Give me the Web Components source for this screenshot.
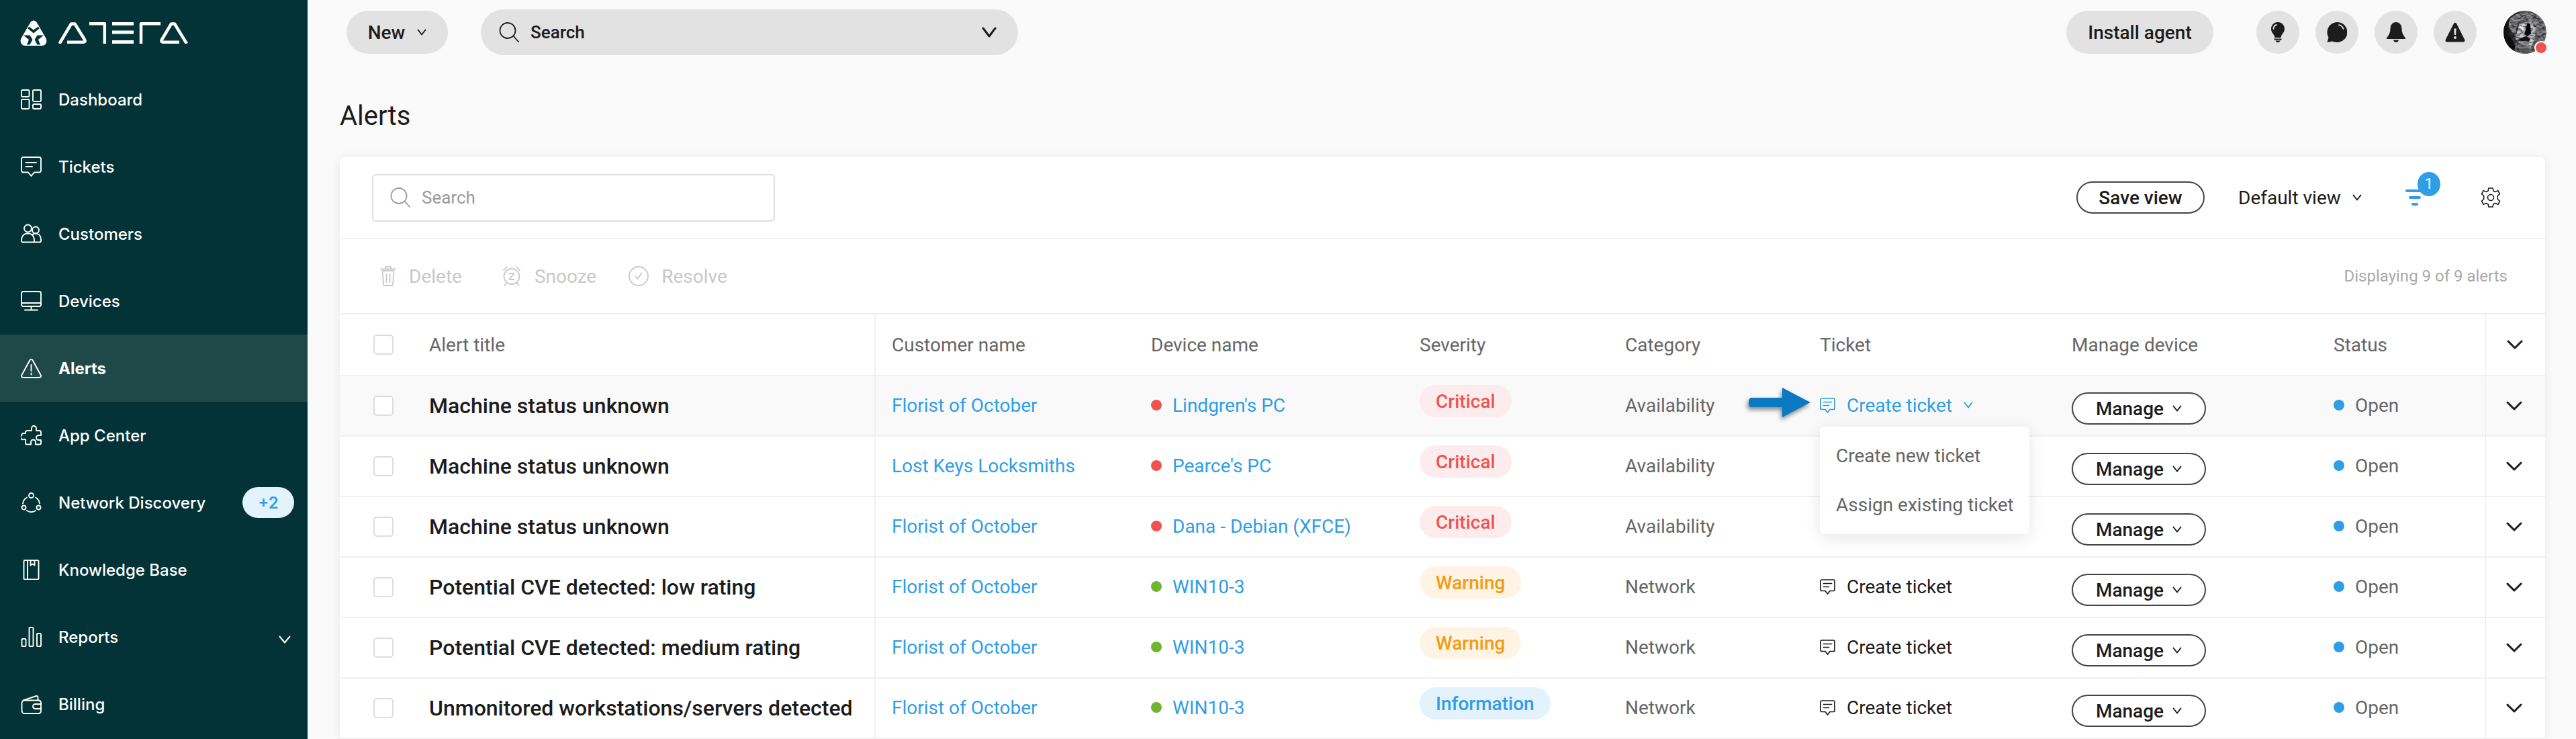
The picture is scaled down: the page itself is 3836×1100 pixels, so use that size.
<!DOCTYPE html>
<html lang="en"><head><meta charset="utf-8"><title>Alerts</title>
<style>
html,body{margin:0;padding:0;height:1100px;overflow:hidden;background:#fafafa;font-family:Roboto,"Liberation Sans",sans-serif;}
</style></head>
<body>
<app-shell>
  <side-bar slot="side">
    <nav-item icon="dash">Dashboard</nav-item>
    <nav-item icon="ticket">Tickets</nav-item>
    <nav-item icon="people">Customers</nav-item>
    <nav-item icon="monitor">Devices</nav-item>
    <nav-item icon="alert" active>Alerts</nav-item>
    <nav-item icon="puzzle">App Center</nav-item>
    <nav-item icon="network" badge="+2">Network Discovery</nav-item>
    <nav-item icon="book">Knowledge Base</nav-item>
    <nav-item icon="bars" caret>Reports</nav-item>
    <nav-item icon="wallet">Billing</nav-item>
  </side-bar>
  <top-bar slot="top"></top-bar>
  <page-title slot="main">Alerts</page-title>
  <alerts-card slot="main"></alerts-card>
</app-shell>
<script>
const ICONS={
dash:'<rect x="1" y="1" width="11.5" height="10" rx="1.5"/><rect x="18" y="1" width="12" height="17" rx="1.5"/><rect x="1" y="15" width="11.5" height="14" rx="1.5"/><rect x="18" y="22" width="12" height="7" rx="1.5"/>',
ticket:'<path d="M3.5 1H27.5A2.5 2.5 0 0 1 30 3.5V21A2.5 2.5 0 0 1 27.5 23.5H20L15.5 29 11 23.5H3.5A2.5 2.5 0 0 1 1 21V3.5A2.5 2.5 0 0 1 3.5 1Z"/><path d="M7.5 9H23M7.5 15H17"/>',
people:'<circle cx="10.5" cy="7" r="5.5"/><circle cx="22" cy="9.5" r="5"/><path d="M1 25C1 18 5 14.5 10.5 14.5S20 18 20 25V27.5H3A2 2 0 0 1 1 25.5Z"/><path d="M17 16.5C18.5 15 20 14.5 22 14.5 26.5 14.5 30 18 30 23V25.5A2 2 0 0 1 28 27.5H20"/>',
monitor:'<rect x="1" y="1" width="29" height="22" rx="2.5"/><path d="M1 18H30M15.5 23V28.5M6 28.5H25"/>',
alert:'<path d="M13.5 3 1.5 25A2.5 2.5 0 0 0 3.7 29H27.3A2.5 2.5 0 0 0 29.5 25L17.5 3A2.3 2.3 0 0 0 13.5 3Z"/><path d="M15.5 10V19M15.5 22.5V24.5"/>',
puzzle:'<path d="M11 8H16V4.5A3.5 3.5 0 0 1 19.5 1 3.5 3.5 0 0 1 23 4.5V8H27.5A2.5 2.5 0 0 1 30 10.5V15H26.5A3.5 3.5 0 0 0 26.5 22H30V26.5A2 2 0 0 1 28 28.5H22V25A3.5 3.5 0 0 0 15 25V28.5H9A2 2 0 0 1 7 26.5V21H4.5A3.5 3.5 0 0 1 1 15 3.5 3.5 0 0 1 4.5 12H7V10.5A2.5 2.5 0 0 1 9.5 8"/>',
network:'<circle cx="15.5" cy="4.5" r="3.5"/><circle cx="4.5" cy="22.5" r="3"/><circle cx="26.5" cy="22.5" r="3"/><path d="M9 7.5A12 12 0 0 0 3 16.5M22 7.5A12 12 0 0 1 28 16.5M9 27A12 12 0 0 0 22 27"/>',
book:'<path d="M6 1H25A1.5 1.5 0 0 1 26.5 2.5V28A1.5 1.5 0 0 1 25 29.5H6A1.5 1.5 0 0 1 4.5 28V2.5A1.5 1.5 0 0 1 6 1Z"/><path d="M10 1V29M14.5 1V8.5L17.5 6.5 20.5 8.5V1"/>',
bars:'<rect x="1.5" y="18" width="6" height="11" rx="1"/><rect x="12.5" y="1" width="6" height="28" rx="1"/><rect x="24" y="10" width="6" height="19" rx="1"/>',
wallet:'<path d="M5.5 9.5H26.5A3.5 3.5 0 0 1 30 13V25.5A3.5 3.5 0 0 1 26.5 29H5.5A4 4 0 0 1 1.5 25V13.5A4 4 0 0 1 5.5 9.5ZM3.5 9.5 23 3C24.5 2.5 25.5 3.5 25.5 5V9.5"/><path d="M30 15H21.5A3.5 3.5 0 0 0 21.5 22H30"/>',
search:'<circle cx="13" cy="12.5" r="11.5"/><path d="M21.5 20.5 29 29"/>',
trash:'<path d="M3.5 7H20.5L19 27.5A1.5 1.5 0 0 1 17.5 29H6.5A1.5 1.5 0 0 1 5 27.5ZM1 4.5H23M8 4.5V1H16V4.5M9.5 12V24M14.5 12V24"/>',
alarm:'<circle cx="15" cy="15.5" r="11.5"/><path d="M3 6.5 7.5 1.5M27 6.5 22.5 1.5M7.5 25 4.5 29M22.5 25 25.5 29M11.5 11H18.5L11.5 20H18.5"/>',
check:'<circle cx="15" cy="15" r="14"/><path d="M10.5 15.5 13.5 19 19.5 10.5"/>',
gear:'<path d="M12 1H18L19 5.3 21.8 6.6 25.8 4.7 28.5 9.7 25.3 12.5V17.5L28.5 20.3 25.8 25.3 21.8 23.4 19 24.7 18 29H12L11 24.7 8.2 23.4 4.2 25.3 1.5 20.3 4.7 17.5V12.5L1.5 9.7 4.2 4.7 8.2 6.6 11 5.3Z" stroke-linejoin="round"/><circle cx="15" cy="15" r="4.5"/>',
tk:'<path d="M3 1H20A2 2 0 0 1 22 3V15.5A2 2 0 0 1 20 17.5H15L11.5 22 8 17.5H3A2 2 0 0 1 1 15.5V3A2 2 0 0 1 3 1Z"/><path d="M5.5 6.5H17.5M5.5 11.5H13.5"/>',
};
const SOLID={
bulb:'<path d="M15 0C9 0 5 4.5 5 10 5 14 7.5 16.5 9.5 19.5L10.5 23H19.5L20.5 19.5C22.5 16.5 25 14 25 10 25 4.5 21 0 15 0Z"/><path d="M9.5 24.5H20.5V26.5H9.5Z"/><path d="M11.5 27.5H18.5C18 29.5 16.5 30 15 30S12 29.5 11.5 27.5Z"/><path d="M8.5 10C8.5 7 10.5 4.5 13 4" fill="none" stroke="#e2e2e2" stroke-width="1.8" stroke-linecap="round"/>',
chat:'<path d="M15.5 0C7.5 0 .5 6.5 .5 15 .5 18.5 1.8 21.5 2.5 23L.5 30 8 28.6C10.3 29.6 12.8 30 15.5 30 23.5 30 30.5 23.5 30.5 15S23.5 0 15.5 0Z"/><path d="M18 4.2C21 4.8 23.5 7 24.5 10" fill="none" stroke="#e2e2e2" stroke-width="1.8" stroke-linecap="round"/>',
bell:'<path d="M15 0C9.5 0 6.5 4.5 6.5 10 6.5 16 4 19.5 1 23.5 .5 24.5 .8 25 2 25H28C29.2 25 29.5 24.5 29 23.5 26 19.5 23.5 16 23.5 10 23.5 4.5 20.5 0 15 0Z"/><path d="M11 26.5H19C18.5 29 16.8 30 15 30S11.5 29 11 26.5Z"/>',
warn:'<path d="M13 2 .8 26C0 27.8 .8 29.5 3 29.5H27C29.2 29.5 30 27.8 29.2 26L17 2C16 .3 14 .3 13 2Z"/><path d="M13.3 9.5H16.7L16.1 19H13.9Z" fill="#e2e2e2"/><circle cx="15" cy="23" r="2" fill="#e2e2e2"/>',
};
const VB={search:'0 0 30 30',trash:'0 0 24 30',alarm:'0 0 30 30',check:'0 0 30 30',tk:'0 0 23 23'};
const icon=(n,w,h,stroke=2,color='currentColor')=>`<svg width="${w}" height="${h}" viewBox="${VB[n]||'0 0 31 30'}" fill="none" stroke="${color}" stroke-width="${stroke}" stroke-linecap="round" stroke-linejoin="round" style="display:block;flex:none">${ICONS[n]}</svg>`;
const solid=n=>`<svg width="30" height="30" viewBox="0 0 30 30" fill="#1c1c1c" style="display:block">${SOLID[n]}</svg>`;
const chev=(w,h,sw=2,c='currentColor')=>`<svg width="${w}" height="${h}" viewBox="0 0 ${w} ${h}" fill="none" stroke="${c}" stroke-width="${sw}" stroke-linecap="round" stroke-linejoin="round" style="display:block;flex:none"><path d="M${sw/2+.5} ${sw/2+.5} ${w/2} ${h-sw/2-.5} ${w-sw/2-.5} ${sw/2+.5}"/></svg>`;

function def(name,css,html){
  customElements.define(name,class extends HTMLElement{
    constructor(){super();this.attachShadow({mode:'open'});}
    connectedCallback(){
      const get=a=>this.getAttribute(a);
      this.shadowRoot.innerHTML=`<style>${css}</style>`+(typeof html==='function'?html(get,this):html);
    }
  });
}

def('app-shell',`:host{display:grid;grid-template-columns:458px 1fr;width:3836px;height:1100px;overflow:hidden}
.main{display:flex;flex-direction:column;min-width:0}`,
`<slot name="side"></slot><div class="main"><slot name="top"></slot><slot name="main"></slot></div>`);

def('side-bar',`:host{display:flex;flex-direction:column;background:#033337;height:1100px;color:#fff;font-family:Inter,Roboto,sans-serif}
.logo{height:98px;padding-left:30px;display:flex;align-items:center;gap:17px;box-sizing:border-box}`,
`<div class="logo">
<svg width="40" height="38" viewBox="0 0 40 38" style="display:block;flex:none"><path d="M15.5 3C18 -.5 22 -.5 24.5 3L38.5 27C41 32 38 38 32.5 38H7.5C2 38 -1 32 1.5 27Z" fill="#fff"/><g fill="#033337"><path d="M13 9.5 20 14.5 27 9.5 28.5 12.5 20 19.5 11.5 12.5Z"/><path d="M5 22.5H14.5L18.5 29 14.5 36.5H10L13 29Z"/><path d="M35 22.5H25.5L21.5 29 25.5 36.5H30L27 29Z"/></g></svg>
<svg width="193" height="32" viewBox="0 0 193 32" style="display:block;flex:none" role="img" aria-label="Atera logo"><g fill="none" stroke="#fff" stroke-width="4.5" stroke-linejoin="round"><path d="M1.5 32 19 2.5H24.5L39 26Q41 29.8 36.5 29.8H13"/><path d="M46 2.3H68.8V32"/><path d="M80 2.3H112M80 15H112M80 29.5H112" stroke-width="4.8"/><path d="M123 32V2.3H152"/><path d="M191 32 173 2.5H168L154 26Q152 29.8 156.5 29.8H180"/></g></svg>
</div><slot></slot>`);

def('nav-item',`:host{display:flex;align-items:center;height:100px;padding:0 20px 0 31px;box-sizing:border-box;font-size:24px;font-weight:450;gap:25px;color:#fff;white-space:nowrap}
:host([active]){background:#1f4849;font-weight:700}
.label{flex:1}
.badge{width:77px;height:46px;border-radius:24px;background:#e3f2fd;color:#2f9ee6;font-size:24px;font-weight:600;display:flex;align-items:center;justify-content:center;font-family:Inter,sans-serif}
.c{margin-right:5px;margin-top:8px}`,
(g,el)=>`${icon(g('icon'),31,30,1.9)}<span class="label"><slot></slot></span>${el.hasAttribute('badge')?`<span class="badge">${g('badge')}</span>`:''}${el.hasAttribute('caret')?`<span class="c">${chev(18,12,2,'#fff')}</span>`:''}`);

def('pill-btn',`:host{display:inline-flex;align-items:center;justify-content:center;height:64px;border-radius:32px;background:#e2e2e2;color:#1c1c1c;font:500 28px Roboto,sans-serif;box-sizing:border-box;white-space:nowrap}
:host([caret]){gap:18px}`,
(g,el)=>`<slot></slot>${el.hasAttribute('caret')?chev(14,10,2,'#1c1c1c'):''}`);

def('round-btn',`:host{display:flex;align-items:center;justify-content:center;width:64px;height:64px;border-radius:50%;background:#e2e2e2}`,
g=>solid(g('icon')));

def('user-avatar',`:host{display:block;position:relative;width:64px;height:64px;margin-left:40px}
svg{display:block}
.dot{position:absolute;right:-2px;bottom:-1px;width:16px;height:16px;background:#ef5350;border-radius:50%;border:2px solid #fff}`,
`<svg width="64" height="64" viewBox="0 0 64 64"><defs><clipPath id="c"><circle cx="32" cy="32" r="32"/></clipPath><filter id="n" x="0" y="0" width="100%" height="100%"><feTurbulence type="fractalNoise" baseFrequency=".16 .3" numOctaves="3" seed="7"/><feColorMatrix values="0 0 0 0 0  0 0 0 0 0  0 0 0 0 0  2.4 0 0 0 -.9"/></filter><linearGradient id="g" x1="0" x2="1"><stop offset="0" stop-color="#111"/><stop offset=".45" stop-color="#5c5c5f"/><stop offset="1" stop-color="#8c8a90"/></linearGradient></defs><g clip-path="url(#c)"><rect width="64" height="64" fill="url(#g)"/><path d="M9 14C14 3 34 0 46 6 56 11 52 25 49 33L44 15 26 14C18 20 18 30 20 41 14 33 5 26 9 14Z" fill="#8f8f92"/><path d="M24 18 42 16 48 28 46 46 38 59 24 60 18 40Z" fill="#c9c9cc"/><path d="M2 30C8 36 14 42 20 62H0Z" fill="#141416"/><path d="M36 18 40 20 41 34 36 38 31 35Z" fill="#0b0b0d"/><path d="M24 23 34 24 33 30 24 28Z" fill="#efeff0"/><path d="M22 42 34 38 40 42 38 46 26 45Z" fill="#1a1a1c"/><path d="M26 46 36 46 36 52 28 52Z" fill="#e8e8ea"/><path d="M18 46 40 54 36 64H16Z" fill="#77777a"/><rect width="64" height="64" filter="url(#n)" opacity=".75"/></g></svg><span class="dot"></span>`);

def('top-bar',`:host{display:flex;align-items:center;height:96px;padding:0 44px 0 58px;box-sizing:border-box;flex:none}
.search{width:800px;height:68px;border-radius:34px;background:#e2e2e2;margin-left:49px;display:flex;align-items:center;padding:0 32px 0 27px;box-sizing:border-box;color:#1c1c1c;font:500 26px Roboto,sans-serif;gap:17px}
.search span{flex:1}
.sp{flex:1}
pill-btn.new{width:151px}
pill-btn.inst{width:219px;margin-right:64px}
.icons{display:flex;gap:24px}
`,`<pill-btn class="new" caret>New</pill-btn>
<div class="search">${icon('search',30,30,1.8)}<span>Search</span>${chev(22,16,3,'#1c1c1c')}</div>
<div class="sp"></div>
<pill-btn class="inst">Install agent</pill-btn>
<div class="icons"><round-btn icon="bulb"></round-btn><round-btn icon="chat"></round-btn><round-btn icon="bell"></round-btn><round-btn icon="warn"></round-btn></div>
<user-avatar></user-avatar>`);

def('page-title',`:host{display:block;font:400 40px/48px Roboto,sans-serif;color:#1c1c1c;margin:53px 0 37px 48px}`,`<slot></slot>`);

const GRID='133px 665px 410px 400px 306px 290px 375px 390px 225px 90px';

def('search-field',`:host{display:flex;align-items:center;width:600px;height:71px;border:2px solid #ddd;border-radius:6px;box-sizing:border-box;padding:0 0 0 25px;gap:17px;color:#9a9a9a;font:400 26px Roboto,sans-serif}`,
`${icon('search',30,30,1.8,'#9a9a9a')}<span>Search</span>`);

def('act-btn',`:host{display:flex;align-items:center;gap:19px;color:#c8c8c8;font:400 28px Roboto,sans-serif;white-space:nowrap}`,
g=>`${icon(g('icon'),g('w')||30,30,1.8,'#c8c8c8')}<slot></slot>`);

def('alerts-toolbar',`:host{display:flex;align-items:center;height:122px;border-bottom:2px solid #f0f0f0;padding:0 65px 0 48px;box-sizing:border-box}
.sp{flex:1}
.save{height:48px;width:191px;border:2px solid #444;border-radius:24px;display:flex;align-items:center;justify-content:center;box-sizing:border-box;font:500 28px Roboto,sans-serif;color:#1c1c1c;background:#fff}
.view{display:flex;align-items:center;gap:17px;font:400 28px Roboto,sans-serif;color:#1c1c1c;margin-left:50px;width:199px;white-space:nowrap}
.filter{position:relative;width:27px;height:24px;margin:0 85px 0 50px;display:flex;flex-direction:column;align-items:center;justify-content:space-between}
.filter i{display:block;height:4px;border-radius:2px;background:#2f9ee6}
.n{position:absolute;left:18px;top:-26px;width:34px;height:36px;border-radius:50%;background:#2f9ee6;color:#fff;font:400 22px/36px Roboto,sans-serif;text-align:center}`,
`<search-field></search-field><div class="sp"></div><div class="save">Save view</div>
<div class="view">Default view ${chev(14,10,2,'#1c1c1c')}</div>
<div class="filter"><i style="width:27px"></i><i style="width:18px"></i><i style="width:10px"></i><span class="n">1</span></div>
${icon('gear',31,30,1.6,'#1c1c1c')}`);

def('action-bar',`:host{display:flex;align-items:center;height:112px;border-bottom:2px solid #f0f0f0;padding:0 56px 0 60px;box-sizing:border-box}
act-btn{margin-right:59px}
act-btn.sn{margin-right:48px}
.sp{flex:1}.d{color:#aaa;font:400 24px Roboto,sans-serif}`,
`<act-btn icon="trash" w="24">Delete</act-btn><act-btn class="sn" icon="alarm">Snooze</act-btn><act-btn icon="check">Resolve</act-btn><div class="sp"></div><div class="d">Displaying 9 of 9 alerts</div>`);

def('check-box',`:host{display:block;width:30px;height:30px;border:2px solid #ddd;border-radius:5px;box-sizing:border-box;background:#fff}`,``);

def('alert-head',`:host{display:grid;grid-template-columns:${GRID};height:92px;border-bottom:2px solid #f0f0f0;box-sizing:border-box;align-items:stretch;font:400 28px Roboto,sans-serif;color:#666}
div{display:flex;align-items:center;white-space:nowrap}
.a{padding-left:50px}
.t{border-right:2px solid #f0f0f0}
.cu{padding-left:24px}
.x{border-left:2px solid #f0f0f0;justify-content:center;color:#1c1c1c;padding-right:2px}`,
`<div class="a"><check-box></check-box></div><div class="t">Alert title</div><div class="cu">Customer name</div><div>Device name</div><div>Severity</div><div>Category</div><div>Ticket</div><div>Manage device</div><div>Status</div><div class="x">${chev(24,14,3,'#1c1c1c')}</div>`);

def('sev-badge',`:host{display:inline-flex;align-items:center;height:48px;padding:0 24px;border-radius:24px;font:500 28px Roboto,sans-serif;margin-bottom:14px;box-sizing:border-box}
:host([k=critical]){background:#fdeced;color:#ef5350}
:host([k=warning]){background:#fef3e4;color:#f39c12}
:host([k=info]){background:#e3f2fd;color:#2f9ee6}`,`<slot></slot>`);

def('manage-btn',`:host{display:flex;align-items:center;justify-content:center;gap:13px;width:200px;height:48px;margin-top:8px;border:2px solid #444;border-radius:24px;box-sizing:border-box;font:500 28px Roboto,sans-serif;color:#1c1c1c;background:#fff}`,
`<slot></slot>${chev(14,10,2,'#1c1c1c')}`);

def('ticket-menu',`:host{display:block;position:absolute;left:0;top:75px;width:312px;height:160px;background:#fff;border-radius:6px;box-shadow:0 6px 24px rgba(0,0,0,.1);z-index:5;box-sizing:border-box;padding:7px 0 0 24px;font:400 28px/73px Roboto,sans-serif;color:#666;white-space:nowrap}
div{height:73px}`,`<div>Create new ticket</div><div>Assign existing ticket</div>`);

def('alert-row',`:host{display:grid;grid-template-columns:${GRID};height:90px;border-bottom:2px solid #f0f0f0;box-sizing:border-box;font:400 28px Roboto,sans-serif;color:#666;background:#fff}
:host([hover]){background:#f9f9f9}
.c{display:flex;align-items:center;white-space:nowrap;min-width:0;position:relative}
.a{padding-left:50px}
.t{border-right:2px solid #f0f0f0;font:500 32px Roboto,sans-serif;color:#1c1c1c}
.cu{padding-left:24px;color:#2f9ee6}
.d{color:#2f9ee6;gap:16px}
.cu,.d,.cat,.tk,.s{padding-bottom:2px;box-sizing:border-box}
.dot{width:16px;height:16px;border-radius:50%;flex:none}
.tk{color:#1c1c1c;gap:17px}
.s{gap:16px}
.s .dot{background:#2f9ee6}
.x{border-left:2px solid #f0f0f0;justify-content:center;padding-right:4px}
.open{color:#2f9ee6}
.arrow{position:absolute;right:100%;margin-right:12px;top:17px;filter:drop-shadow(-2px 4px 3px rgba(0,0,0,.45))}`,
(g,el)=>{const open=el.hasAttribute('open');const hide=el.hasAttribute('covered');return `
<div class="c a"><check-box></check-box></div>
<div class="c t">${g('title')}</div>
<div class="c cu">${g('customer')}</div>
<div class="c d"><span class="dot" style="background:${g('dev')==='ok'?'#6fb52f':'#ef5350'}"></span>${g('device')}</div>
<div class="c"><sev-badge k="${g('sev')}">${g('sevlabel')}</sev-badge></div>
<div class="c cat">${g('cat')}</div>
<div class="c tk ${open?'open':''}">${hide?'':icon('tk',23,23,1.7)+'Create ticket'}${open?`<span>${chev(14,10,2)}</span><svg class="arrow" width="95" height="44" viewBox="0 0 95 44"><path d="M93 22 51 0V15H5Q1 15 1 22T5 29H51V44Z" fill="#0a78c2"/></svg><ticket-menu></ticket-menu>`:''}</div>
<div class="c"><manage-btn>Manage</manage-btn></div>
<div class="c s"><span class="dot"></span>Open</div>
<div class="c x">${chev(24,14,3,'#1c1c1c')}</div>`});

const ROWS=[
['Machine status unknown','Florist of October','bad',"Lindgren's PC",'critical','Critical','Availability','hover open'],
['Machine status unknown','Lost Keys Locksmiths','bad',"Pearce's PC",'critical','Critical','Availability','covered'],
['Machine status unknown','Florist of October','bad','Dana - Debian (XFCE)','critical','Critical','Availability','covered'],
['Potential CVE detected: low rating','Florist of October','ok','WIN10-3','warning','Warning','Network',''],
['Potential CVE detected: medium rating','Florist of October','ok','WIN10-3','warning','Warning','Network',''],
['Unmonitored workstations/servers detected','Florist of October','ok','WIN10-3','info','Information','Network',''],
];
def('alerts-card',`:host{display:block;margin-left:48px;width:3284px;background:#fff;border-radius:8px 8px 0 0;box-shadow:0 2px 16px rgba(0,0,0,.08);flex:1}`,
`<alerts-toolbar></alerts-toolbar><action-bar></action-bar><alert-head></alert-head>`+ROWS.map(r=>`<alert-row title="${r[0]}" customer="${r[1]}" dev="${r[2]}" device="${r[3]}" sev="${r[4]}" sevlabel="${r[5]}" cat="${r[6]}" ${r[7]}></alert-row>`).join(''));
</script>
</body></html>
